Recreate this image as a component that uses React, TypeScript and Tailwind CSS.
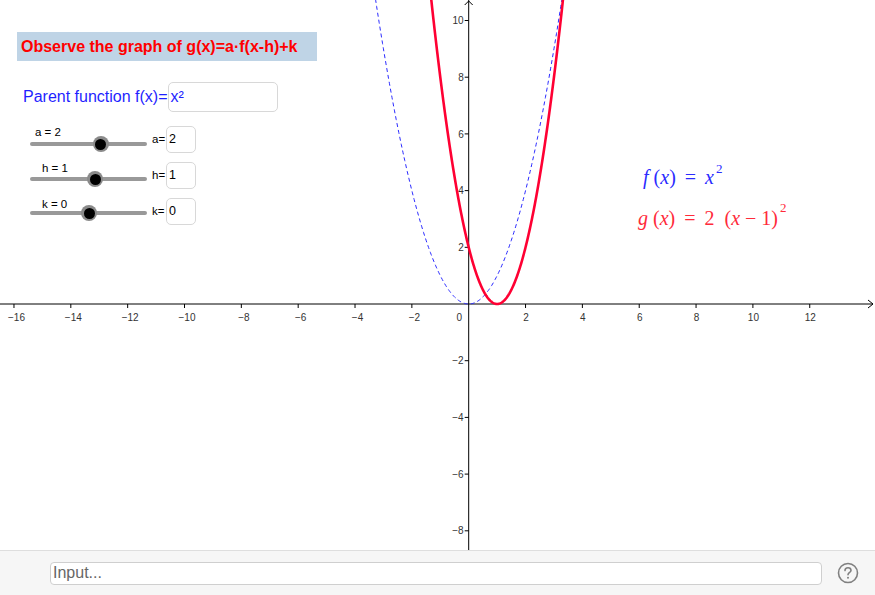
import React from "react";

// graph coordinate helpers (origin and scale read from the reference)
const OX = 468.7;
const OY = 304;
const SX = 28.42;
const SY = 28.35;
const px = (u: number) => OX + u * SX;
const py = (v: number) => OY - v * SY;

function curvePath(f: (u: number) => number, from: number, to: number) {
  const pts: string[] = [];
  const steps = 240;
  for (let i = 0; i <= steps; i++) {
    const u = from + ((to - from) * i) / steps;
    pts.push(`${i === 0 ? "M" : "L"}${px(u).toFixed(2)},${py(f(u)).toFixed(2)}`);
  }
  return pts.join(" ");
}

const xTicks = [-16, -14, -12, -10, -8, -6, -4, -2, 2, 4, 6, 8, 10, 12];
const yTicks = [10, 8, 6, 4, 2, -2, -4, -6, -8];
const fmt = (n: number) => (n < 0 ? `\u2212${Math.abs(n)}` : `${n}`);

function Graph() {
  return (
    <svg width="875" height="550" className="block" style={{ fontFamily: "'Liberation Sans', Arial, sans-serif" }}>
      {/* axes */}
      <line x1="0" y1={OY} x2="873" y2={OY} stroke="#000" strokeWidth="1" />
      <line x1={OX} y1="0" x2={OX} y2="550" stroke="#000" strokeWidth="1" />
      <polyline points={`${OX - 4},5 ${OX},1 ${OX + 4},5`} fill="none" stroke="#000" strokeWidth="1" />
      <polyline points={`868,300 873,304 868,308`} fill="none" stroke="#000" strokeWidth="1" />

      {xTicks.map((u) => (
        <g key={`x${u}`}>
          <line x1={px(u)} y1={OY} x2={px(u)} y2={OY + 4} stroke="#000" strokeWidth="1" />
          <text x={px(u) + (u < 0 ? 2.5 : 0.5)} y={OY + 16.5} fontSize="10" fill="#333" textAnchor="middle">
            {fmt(u)}
          </text>
        </g>
      ))}
      <text x={OX - 9.5} y={OY + 16.5} fontSize="10" fill="#333" textAnchor="middle">
        0
      </text>

      {yTicks.map((v) => (
        <g key={`y${v}`}>
          <line x1={OX - 4} y1={py(v)} x2={OX} y2={py(v)} stroke="#000" strokeWidth="1" />
          <text x={OX - 5} y={py(v) + 3.6} fontSize="10" fill="#333" textAnchor="end">
            {fmt(v)}
          </text>
        </g>
      ))}

      {/* f(x) = x^2 dashed */}
      <path
        d={curvePath((u) => u * u, -3.6, 3.6)}
        fill="none"
        stroke="#2a2aff"
        strokeWidth="1"
        strokeDasharray="4 3"
      />
      {/* g(x) = 2(x-1)^2 */}
      <path
        d={curvePath((u) => 2 * (u - 1) * (u - 1), -1.45, 3.45)}
        fill="none"
        stroke="#ff0033"
        strokeWidth="2.6"
        strokeLinejoin="round"
      />
    </svg>
  );
}

function Slider({ label, knob, lineTop, name, value }: { label: string; knob: number; lineTop: number; name: string; value: string }) {
  return (
    <div className="flex h-[27px] items-center">
      <div className="relative h-[27px] w-[117px]">
        <span className="absolute top-0 text-[11.5px] leading-[13px] text-black" style={{ left: label.startsWith("a") ? 5 : 12 }}>
          {label}
        </span>
        <div className="absolute left-0 right-0 h-[4px] rounded-full bg-[#999]" style={{ top: lineTop - 2 }} />
        <div
          className="absolute flex h-[16px] w-[16px] items-center justify-center rounded-full bg-[#8a8a8a]"
          style={{ left: knob - 8, top: lineTop - 8 }}
        >
          <div className="h-[11px] w-[11px] rounded-full bg-black" />
        </div>
      </div>
      <span className="ml-[5px] w-[14px] text-[11.5px] text-black">{name}=</span>
      <div className="flex h-[27px] w-[30px] items-center rounded-[5px] border border-[#d8d8d8] bg-white pl-[2px] text-[12.5px] text-black">
        {value}
      </div>
    </div>
  );
}

function Controls() {
  return (
    <div className="absolute left-0 top-0 flex flex-col" style={{ fontFamily: "'Liberation Sans', Arial, sans-serif" }}>
      <div className="ml-[17px] mt-[32px] flex h-[29px] w-[300px] items-center bg-[#bfd4e6] pl-[4px] text-[16px] font-bold text-[#ff0000]">
        Observe the graph of g(x)=a·f(x-h)+k
      </div>
      <div className="ml-[23px] mt-[21px] flex h-[30px] items-center">
        <span className="text-[16px] text-[#1f1fff]">Parent function f(x)=</span>
        <div className="flex h-[30px] w-[110px] items-center rounded-[5px] border border-[#d8d8d8] bg-white pl-[2px] text-[16px] text-[#1f1fff]">
          x²
        </div>
      </div>
      <div className="ml-[30px] mt-[14px] flex flex-col gap-[9px]">
        <Slider label="a = 2" knob={70.5} lineTop={18} name="a" value="2" />
        <Slider label="h = 1" knob={65} lineTop={17} name="h" value="1" />
        <Slider label="k = 0" knob={59} lineTop={15} name="k" value="0" />
      </div>
    </div>
  );
}

function Formulas() {
  const serif = { fontFamily: "'Liberation Serif', 'Times New Roman', serif" };
  return (
    <div className="absolute left-[638px] top-[162px] flex flex-col gap-[11px] text-[20px]" style={serif}>
      <div className="ml-[5px] flex items-start whitespace-pre text-[#2b2bff]">
        <span>
          <i>f</i> (<i>x</i>)
        </span>
        <span className="mx-[9px]">=</span>
        <i>x</i>
        <span className="-mt-[3px] ml-[2px] text-[13px]">2</span>
      </div>
      <div className="flex items-start whitespace-pre text-[#ff2a3a]">
        <span>
          <i>g</i> (<i>x</i>)
        </span>
        <span className="mx-[9px]">=</span>
        <span>
          2  (<i>x</i> − 1)
        </span>
        <span className="-mt-[5px] ml-[2px] text-[13px]">2</span>
      </div>
    </div>
  );
}

export default function App() {
  return (
    <div className="relative flex h-[595px] w-[875px] flex-col overflow-hidden bg-white">
      <div className="relative h-[550px]">
        <Graph />
        <Controls />
        <Formulas />
      </div>
      <div className="flex h-[45px] items-center border-t border-[#dedede] bg-[#f6f6f6]">
        <input
          className="ml-[50px] h-[23px] w-[772px] rounded-[4px] border border-[#cfcfcf] bg-white px-[2px] text-[16px] text-[#444] outline-none placeholder:text-[#666]"
          style={{ fontFamily: "'Liberation Sans Narrow', 'Liberation Sans', Arial, sans-serif" }}
          placeholder="Input..."
        />
        <svg className="ml-[15px]" width="22" height="22" viewBox="0 0 22 22">
          <circle cx="11" cy="11" r="9.5" fill="none" stroke="#808080" strokeWidth="1.6" />
          <path d="M8 8.6 C8 6.6 9.4 5.8 11 5.8 C12.7 5.8 14 6.9 14 8.4 C14 10.4 11 10.6 11 12.8" fill="none" stroke="#808080" strokeWidth="1.6" strokeLinecap="round" />
          <circle cx="11" cy="15.8" r="1" fill="#808080" />
        </svg>
      </div>
    </div>
  );
}
